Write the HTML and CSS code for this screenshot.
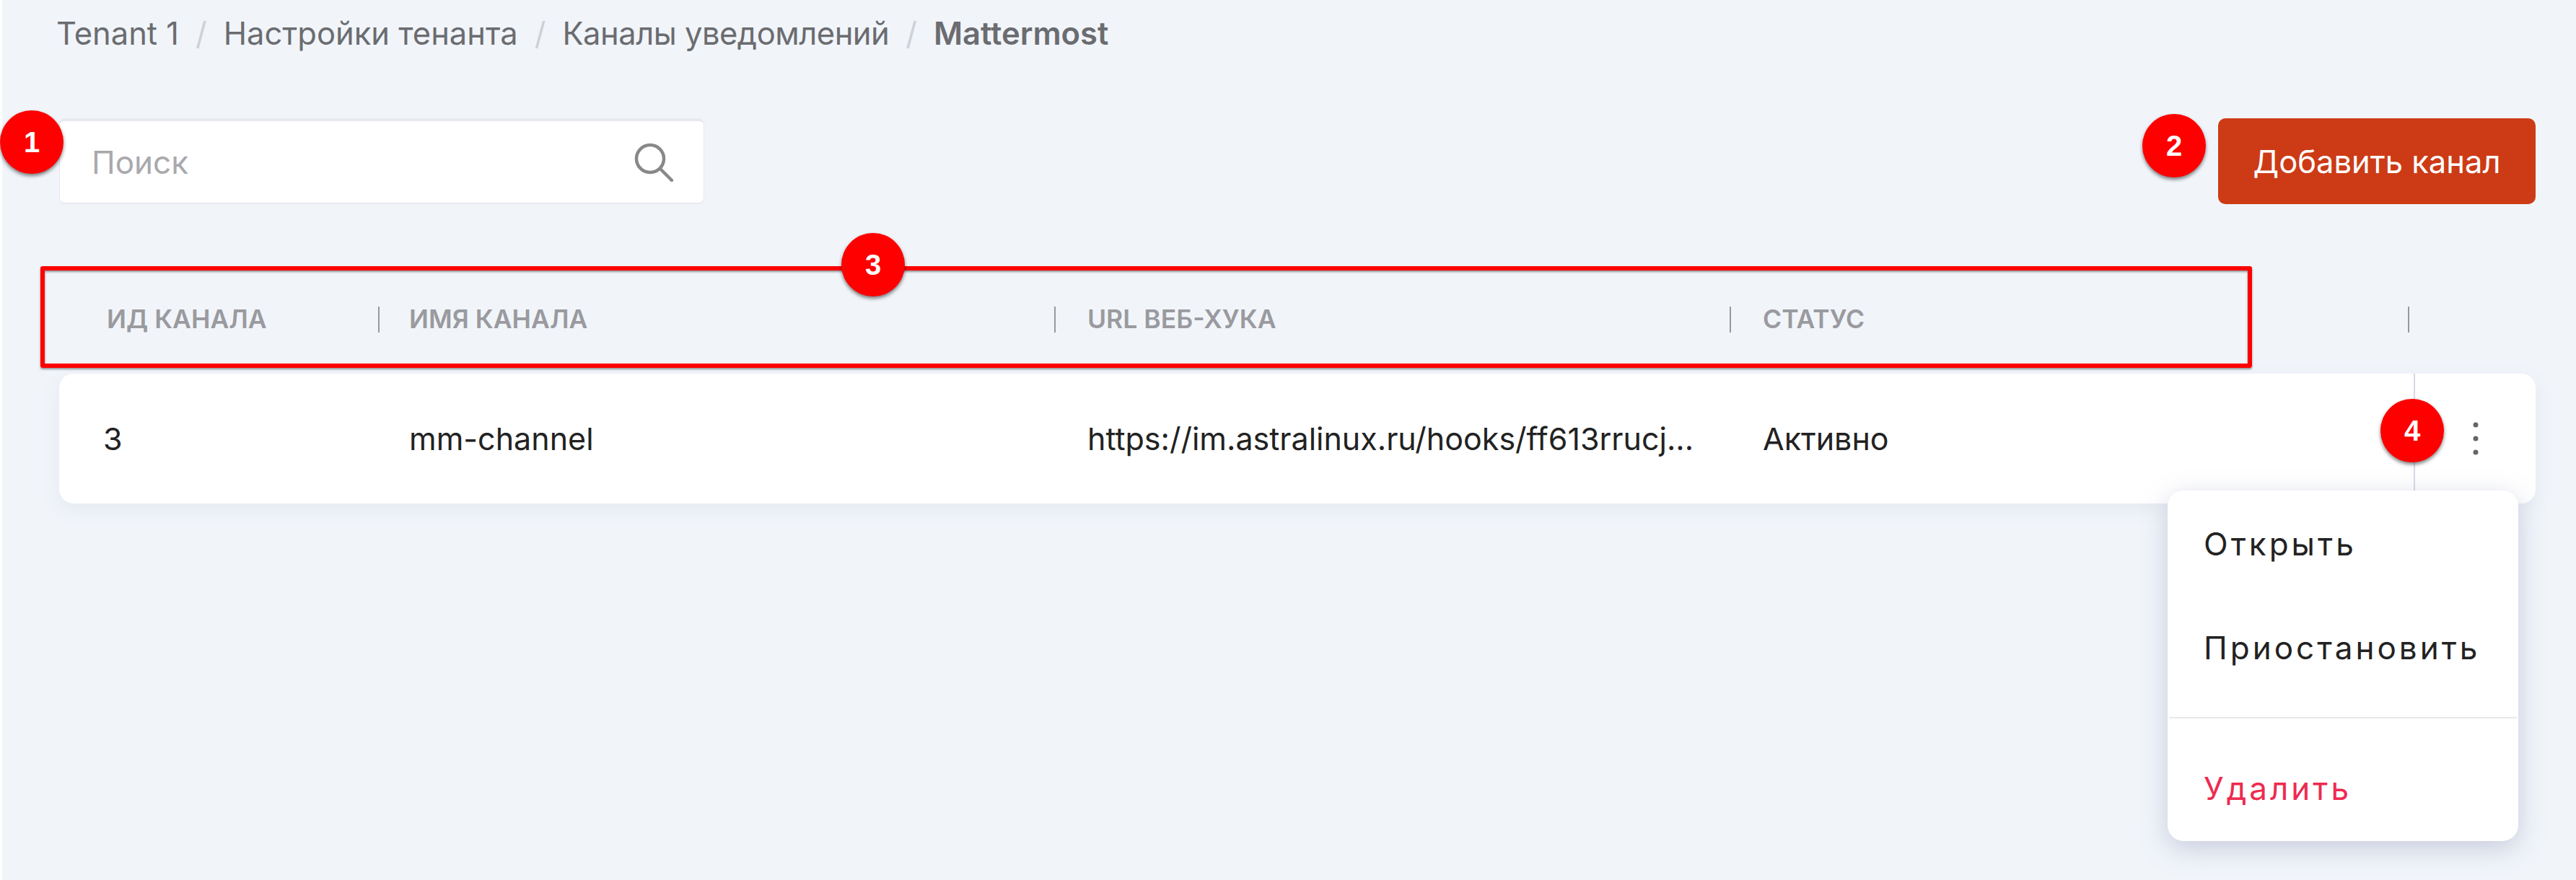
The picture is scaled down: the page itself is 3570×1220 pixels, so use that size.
FILE: index.html
```html
<!DOCTYPE html>
<html lang="ru">
<head>
    <meta charset="UTF-8">
    <title>Mattermost</title>
    <link rel="stylesheet" href="styles.css">
</head>
<body>
    <div class="page">
        <nav class="breadcrumb">
            <span>Tenant 1</span><span class="sep">/</span>
            <span>Настройки тенанта</span><span class="sep">/</span>
            <span class="tight">Каналы уведомлений</span><span class="sep">/</span>
            <span class="current">Mattermost</span>
        </nav>

        <div class="toolbar">
            <div class="search">
                <span class="placeholder">Поиск</span>
                <svg class="search-icon" width="54" height="54" viewBox="0 0 54 54" fill="none" stroke="#888" stroke-width="4.5">
                    <circle cx="22" cy="22" r="19"/>
                    <path d="M36 36 L52 52" stroke-linecap="round"/>
                </svg>
            </div>
            <button class="add-btn">Добавить канал</button>
        </div>

        <div class="table-head">
            <div class="th col-id">ИД КАНАЛА</div>
            <div class="th col-name">ИМЯ КАНАЛА</div>
            <div class="th col-url">URL ВЕБ-ХУКА</div>
            <div class="th col-status">СТАТУС</div>
            <div class="th col-actions"></div>
        </div>

        <div class="table-row">
            <div class="td col-id">3</div>
            <div class="td col-name">mm-channel</div>
            <div class="td col-url">https://im.astralinux.ru/hooks/ff613rrucj...</div>
            <div class="td col-status">Активно</div>
            <div class="td col-actions">
                <svg width="10" height="50" viewBox="0 0 10 50" fill="#666">
                    <circle cx="5" cy="6" r="3.5"/>
                    <circle cx="5" cy="25" r="3.5"/>
                    <circle cx="5" cy="44" r="3.5"/>
                </svg>
            </div>
        </div>
    </div>

    <!-- dropdown -->
    <div class="menu">
        <div class="menu-item">Открыть</div>
        <div class="menu-item">Приостановить</div>
        <div class="menu-line"></div>
        <div class="menu-item danger">Удалить</div>
    </div>

    <!-- annotations -->
    <div class="highlight"></div>
    <div class="badge badge-1">1</div>
    <div class="badge badge-2">2</div>
    <div class="badge badge-3">3</div>
    <div class="badge badge-4">4</div>
</body>
</html>
```

FILE: styles.css
```css
html, body {
    margin: 0;
    padding: 0;
}
body {
    width: 3570px;
    height: 1220px;
    position: relative;
    overflow: hidden;
    background: #fff;
    font-family: Inter, "Noto Sans", sans-serif;
}
.page {
    margin-left: 3px;
    height: 1220px;
    padding: 0 56px 0 79px;
    background: #f1f5fa;
    box-sizing: border-box;
}
.breadcrumb {
    display: flex;
    align-items: center;
    height: 92px;
    margin-left: -4px;
    font-size: 43.5px;
    color: #6b6c70;
    white-space: nowrap;
}
.sep {
    margin: 0 23px;
    color: #cfd1d6;
}
.tight {
    letter-spacing: -0.5px;
}
.current {
    font-weight: 600;
}
.toolbar {
    display: flex;
    justify-content: space-between;
    margin-top: 72px;
}
.search {
    display: flex;
    align-items: center;
    justify-content: space-between;
    width: 894px;
    height: 119px;
    box-sizing: border-box;
    padding: 0 42px 0 44px;
    background: #fff;
    border: 1px solid #e8e9ef;
    border-top-width: 4px;
    border-bottom-width: 2px;
    border-radius: 8px;
}
.placeholder {
    font-size: 44px;
    color: #a9a9ad;
}
.add-btn {
    width: 440px;
    height: 119px;
    background: #cc3b16;
    color: #fff;
    border: none;
    border-radius: 10px;
    font-family: inherit;
    font-size: 43.5px;
}
.table-head {
    display: flex;
    align-items: center;
    height: 100px;
    margin-top: 110px;
}
.th {
    height: 36px;
    line-height: 36px;
    font-size: 35.5px;
    font-weight: 600;
    color: #9a9a9f;
    border-left: 2px solid #999;
    padding-left: 44px;
    box-sizing: border-box;
}
.table-row {
    display: flex;
    align-items: center;
    height: 180px;
    margin-top: 25px;
    background: #fff;
    border-radius: 20px;
    box-shadow: 0 8px 24px rgba(120, 130, 160, 0.1);
    font-size: 43px;
    color: #222;
}
.td {
    padding-left: 46px;
    box-sizing: border-box;
    white-space: nowrap;
}
.col-id { width: 442px; }
.col-name { width: 937px; }
.col-url { width: 936px; }
.col-status { width: 940px; }
.col-actions { flex: 1; }
.th.col-id {
    border-left: none;
    padding-left: 66px;
}
.th.col-name {
    padding-left: 41px;
}
.td.col-id {
    padding-left: 61px;
}
.td.col-name {
    padding-left: 43px;
}
.td.col-actions {
    align-self: stretch;
    display: flex;
    align-items: center;
    justify-content: center;
    margin-left: 8px;
    border-left: 2px solid #d8d8e4;
    padding: 0;
}
.menu {
    position: absolute;
    left: 3004px;
    top: 680px;
    width: 486px;
    height: 486px;
    padding-top: 2px;
    box-sizing: border-box;
    background: #fff;
    border-radius: 22px;
    box-shadow: 0 10px 36px rgba(120, 130, 165, 0.35);
    font-size: 44px;
    letter-spacing: 4px;
    color: #222;
}
.menu-item {
    height: 144px;
    line-height: 144px;
    padding-left: 50px;
}
.menu-line {
    height: 2px;
    margin: 24px 2px 25px;
    background: #e8e8ec;
}
.danger {
    color: #ee2a50;
}
.highlight {
    position: absolute;
    left: 56px;
    top: 369px;
    width: 3065px;
    height: 141px;
    box-sizing: border-box;
    border: 6px solid #f00;
    border-radius: 3px;
    box-shadow: 0 2px 3px rgba(0, 0, 0, 0.4), inset 0 2px 3px rgba(0, 0, 0, 0.4);
}
.badge {
    position: absolute;
    width: 88px;
    height: 88px;
    border-radius: 50%;
    background: #f00;
    color: #fff;
    font-family: "Liberation Sans", sans-serif;
    font-size: 40px;
    font-weight: 700;
    line-height: 88px;
    text-align: center;
    box-shadow: 0 3px 5px rgba(0, 0, 0, 0.5);
}
.badge-1 { left: 0; top: 153px; }
.badge-2 { left: 2969px; top: 158px; }
.badge-3 { left: 1166px; top: 323px; }
.badge-4 { left: 3299px; top: 553px; }
```
